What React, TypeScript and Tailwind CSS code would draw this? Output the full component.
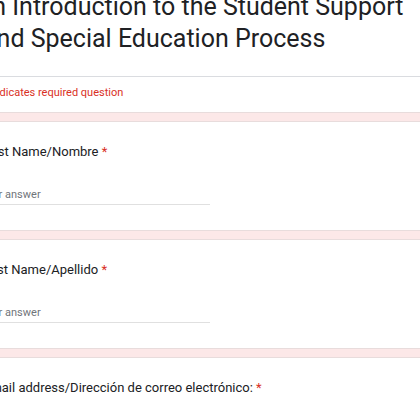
import React from 'react';

const questions = [
  'First Name/Nombre',
  'Last Name/Apellido',
  'Email address/Dirección de correo electrónico:',
];

function Band() {
  return <div className="h-[10px] border-y border-[#e8dcdc] bg-[#fce8e8]" />;
}

function Question({ label }: { label: string }) {
  return (
    <div className="bg-white pt-[20px] pb-[25px]">
      <div className="text-[13px] leading-[20px] text-[#202124]">
        {label} <span className="text-[#d93025]">*</span>
      </div>
      <div className="mt-[25px] w-[227px] border-b border-[#e0e0e0] pb-[1px] text-[11px] leading-[16px] text-[#70757a]">
        <span className="-ml-[3px]">Your answer</span>
      </div>
    </div>
  );
}

export default function App() {
  return (
    <div className="h-[420px] w-[420px] overflow-hidden bg-white" style={{ fontFamily: 'Roboto, "Noto Sans", sans-serif' }}>
      <div className="-ml-[17px] -mt-[9px] w-[470px]">
        {/* Header */}
        <div className="bg-white">
          <h1 className="pl-[3px] -indent-[10px] text-[25px] font-normal leading-[32px] text-[#202124]">
            An Introduction to the Student Support
            <br />
            <span className="-ml-[3px]">and Special Education Process</span>
          </h1>
          <div className="mt-[21px] border-t border-[#dadce0]" />
          <div className="pt-[8px] pb-[11px] text-[11px] leading-[16px] text-[#d93025]">* Indicates required question</div>
        </div>
        {questions.map((q) => (
          <React.Fragment key={q}>
            <Band />
            <Question label={q} />
          </React.Fragment>
        ))}
      </div>
    </div>
  );
}
